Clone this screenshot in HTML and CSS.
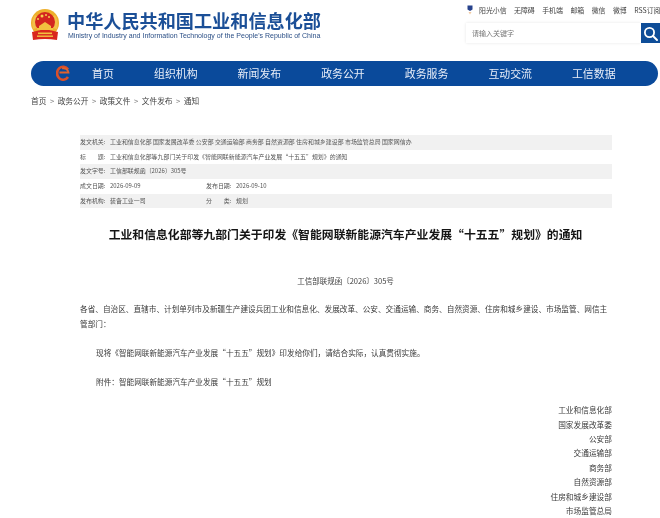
FILE: index.html
```html
<!DOCTYPE html>
<html lang="zh">
<head>
<meta charset="utf-8">
<title>工业和信息化部</title>
<link rel="stylesheet" href="styles.css">
</head>
<body>
<div class="page">
  <header class="header">
    <div class="brand">
      <svg class="emblem" viewBox="0 0 30 32" width="30" height="32" aria-hidden="true">
        <circle cx="15" cy="14" r="14" fill="#eeb02c"/>
        <path d="M3 20 Q1 12 5 6 L9 9 Q6 14 7 19Z" fill="#f3c14a"/>
        <path d="M27 20 Q29 12 25 6 L21 9 Q24 14 23 19Z" fill="#f3c14a"/>
        <circle cx="15" cy="13" r="10" fill="#d3261f"/>
        <circle cx="12" cy="7" r="1.5" fill="#f6d04d"/>
        <circle cx="8" cy="10" r="1" fill="#f6d04d"/>
        <circle cx="16" cy="6" r="1" fill="#f6d04d"/>
        <circle cx="19" cy="8" r="1" fill="#f6d04d"/>
        <path d="M9 17 L15 13 L21 17 L21 19 L9 19Z" fill="#f2c13f"/>
        <rect x="7" y="19" width="16" height="2" fill="#f2c13f"/>
        <path d="M2 23 Q15 19 28 23 L27 31 Q15 29 3 31Z" fill="#d9271e"/>
        <rect x="8" y="23.5" width="14" height="1.6" fill="#f2c13f"/>
        <rect x="7" y="26.5" width="16" height="1.4" fill="#f2c13f"/>
      </svg>
      <div class="brand-text">
        <div class="brand-cn">中华人民共和国工业和信息化部</div>
        <div class="brand-en">Ministry of Industry and Information Technology of the People's Republic of China</div>
      </div>
    </div>
    <div class="tools">
      <div class="links">
        <svg class="pin" viewBox="0 0 6 10" width="6" height="10" aria-hidden="true">
          <path d="M0.5 0.5H5.5V4.5L3 6L0.5 4.5Z" fill="#27428c"/>
          <path d="M1.5 7H4.5L3 9.5Z" fill="#f2c9a0"/>
        </svg>
        <span>阳光小信</span><span>无障碍</span><span>手机端</span><span>邮箱</span><span>微信</span><span>微博</span><span>RSS订阅</span>
      </div>
      <div class="search">
        <div class="search-input">请输入关键字</div>
        <div class="search-btn">
          <svg viewBox="0 0 19 19" width="19" height="19" aria-hidden="true">
            <circle cx="8.5" cy="8.5" r="4.6" fill="none" stroke="#fff" stroke-width="1.8"/>
            <path d="M12 12L16 16" stroke="#fff" stroke-width="2" stroke-linecap="round"/>
          </svg>
        </div>
      </div>
    </div>
  </header>

  <nav class="nav">
    <svg class="nav-logo" viewBox="0 0 14 16" width="14" height="16" aria-hidden="true">
      <path d="M12 4.5 A6 6.5 0 1 0 12 12" fill="none" stroke="#d9502a" stroke-width="2.6"/>
      <path d="M3.5 7.5 H12.5 A5 5 0 0 0 6 3.5" fill="none" stroke="#e2622d" stroke-width="1.8"/>
    </svg>
    <a class="nav-item nav-home">首页</a>
    <a class="nav-item">组织机构</a>
    <a class="nav-item">新闻发布</a>
    <a class="nav-item">政务公开</a>
    <a class="nav-item">政务服务</a>
    <a class="nav-item">互动交流</a>
    <a class="nav-item">工信数据</a>
  </nav>

  <div class="crumbs">
    <span>首页</span><i>&gt;</i><span>政务公开</span><i>&gt;</i><span>政策文件</span><i>&gt;</i><span>文件发布</span><i>&gt;</i><span>通知</span>
  </div>

  <section class="meta">
    <div class="meta-row shade"><span class="label">发文机关:</span><span>工业和信息化部 国家发展改革委 公安部 交通运输部 商务部 自然资源部 住房和城乡建设部 市场监管总局 国家网信办</span></div>
    <div class="meta-row"><span class="label">标　　题:</span><span>工业和信息化部等九部门关于印发《智能网联新能源汽车产业发展“十五五”规划》的通知</span></div>
    <div class="meta-row shade"><span class="label">发文字号:</span><span>工信部联规函〔2026〕305号</span></div>
    <div class="meta-row"><span class="label">成文日期:</span><span class="half">2026-09-09</span><span class="label">发布日期:</span><span>2026-09-10</span></div>
    <div class="meta-row shade"><span class="label">发布机构:</span><span class="half">装备工业一司</span><span class="label">分　　类:</span><span>规划</span></div>
  </section>

  <h1 class="title">工业和信息化部等九部门关于印发《智能网联新能源汽车产业发展“十五五”规划》的通知</h1>
  <p class="docno">工信部联规函〔2026〕305号</p>

  <article class="body">
    <p class="lead">各省、自治区、直辖市、计划单列市及新疆生产建设兵团工业和信息化、发展改革、公安、交通运输、商务、自然资源、住房和城乡建设、市场监管、网信主管部门：</p>
    <p class="para">现将《智能网联新能源汽车产业发展“十五五”规划》印发给你们，请结合实际，认真贯彻实施。</p>
    <p class="para">附件：智能网联新能源汽车产业发展“十五五”规划</p>
    <div class="sign">
      <div>工业和信息化部</div>
      <div>国家发展改革委</div>
      <div>公安部</div>
      <div>交通运输部</div>
      <div>商务部</div>
      <div>自然资源部</div>
      <div>住房和城乡建设部</div>
      <div>市场监管总局</div>
    </div>
  </article>
</div>
</body>
</html>
```
FILE: styles.css
```css
* { box-sizing: border-box; }
html, body { margin: 0; padding: 0; height: 518px; overflow: hidden; background: #fff; }
body { font-family: "Noto Sans CJK SC", "Noto Sans", sans-serif; color: #333; }
.page { width: 660px; filter: blur(0.35px); }

.header { display: flex; justify-content: space-between; height: 61px; padding-left: 30px; }
.brand { display: flex; align-items: flex-start; padding-top: 9px; gap: 7px; }
.emblem { flex: none; }
.brand-cn { font-size: 18.15px; line-height: 20px; font-weight: 700; color: #1b4f97; margin-top: 1px; white-space: nowrap; }
.brand-en { font-family: "Liberation Sans", sans-serif; font-size: 7.03px; line-height: 10px; color: #2b4f86; margin-top: 1px; margin-left: 1px; white-space: nowrap; }

.tools { width: 194px; padding-top: 3px; }
.links { display: flex; align-items: center; height: 13px; font-size: 6.9px; color: #444; white-space: nowrap; gap: 7.5px; margin-left: 1px; }
.pin { flex: none; margin-right: -1.5px; }
.search { display: flex; height: 20px; margin-top: 7px; }
.search-input { flex: 1; font-size: 7px; line-height: 20px; color: #777; padding-left: 6px; box-shadow: 0 0 3px #e6e6e6; }
.search-btn { width: 19px; height: 20px; background: #0e4d98; display: flex; align-items: center; justify-content: center; }

.nav { display: flex; align-items: center; height: 24.5px; margin: 0 2px 0 31px; background: #0a4a9b; border-radius: 12.5px; color: #e8eef8; padding-left: 25px; }
.nav-logo { flex: none; }
.nav-item { font-size: 10.9px; line-height: 24px; width: 43.6px; margin-left: 40px; white-space: nowrap; }
.nav-home { width: 22px; margin-left: 22px; }

.crumbs { display: flex; align-items: center; height: 14px; margin: 7.5px 0 0 31px; font-size: 7.7px; color: #444; white-space: nowrap; }
.crumbs i { font-style: normal; margin: 0 3.5px; color: #777; }

.meta { margin: 28px 48px 0 80px; font-size: 5.95px; color: #555; }
.meta-row { display: flex; height: 14.7px; line-height: 14.7px; white-space: nowrap; }
.shade { background: #f1f1f1; }
.label { width: 30px; flex: none; }
.half { width: 96px; flex: none; }

.title { margin: 17.5px 0 0; text-align: center; font-size: 11.85px; line-height: 16px; font-weight: 700; color: #151515; padding-left: 31px; white-space: nowrap; }
.docno { margin: 32px 0 0; text-align: center; font-size: 7.5px; line-height: 14px; color: #444; padding-left: 31px; }

.body { margin: 13.5px 48px 0 80px; font-size: 7.65px; line-height: 15px; color: #3a3a3a; }
.lead { margin: 0; }
.para { margin: 14px 0 0; text-indent: 16px; }
.sign { margin-top: 14px; text-align: right; line-height: 14.35px; font-size: 7.7px; }
```
